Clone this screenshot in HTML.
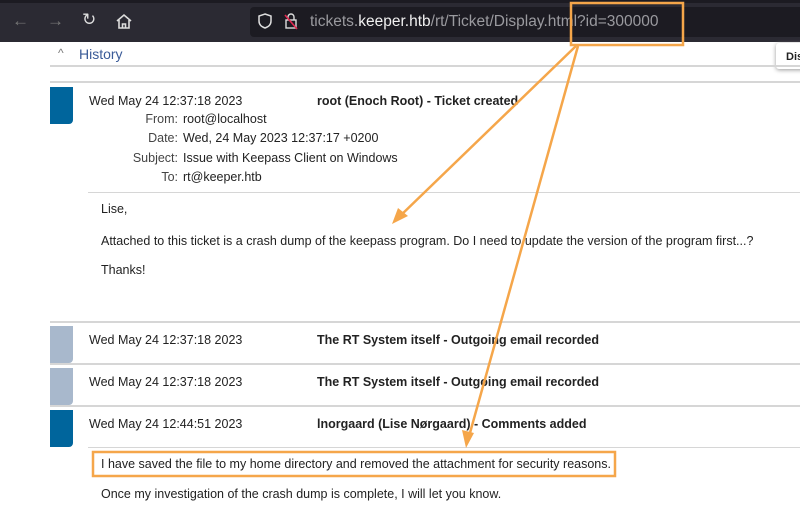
<!DOCTYPE html>
<html><head><meta charset="utf-8"><style>
body{margin:0;width:800px;height:531px;position:relative;overflow:hidden;background:#fff;font-family:"Liberation Sans",sans-serif;font-size:12.5px;color:#222}
.a{position:absolute;white-space:nowrap}
.b{font-weight:bold}
.lab{text-align:right;width:78px;color:#444}
.line{position:absolute;height:2px;background:#d6d6d6}
.mark{position:absolute;left:50px;width:23px;border-radius:0 0 4px 0}
</style></head><body>
<div class="a" style="left:0;top:0;width:800px;height:42px;background:#2b2a33"></div>
<div class="a" style="left:0;top:0;width:800px;height:3px;background:#1c1b22"></div>
<div class="a" style="left:250px;top:7px;width:560px;height:30px;background:#1c1b22;border-radius:4px"></div>
<div class="a" style="left:12px;top:11px;color:#777;font-size:17px">←</div>
<div class="a" style="left:47px;top:11px;color:#777;font-size:17px">→</div>
<div class="a" style="left:82px;top:10px;color:#ddd;font-size:17px">↻</div>
<svg class="a" style="left:115px;top:13px" width="18" height="18"><path d="M2 8 L9 2 L16 8 M4 7 V15 H14 V7 M7.5 15 V11 H10.5 V15" stroke="#ddd" stroke-width="1.6" fill="none"/></svg>
<svg class="a" style="left:257px;top:12px" width="16" height="18"><path d="M8 2 L14 4 V9 C14 13 11 15 8 16 C5 15 2 13 2 9 V4 Z" stroke="#ddd" stroke-width="1.5" fill="none"/></svg>
<svg class="a" style="left:284px;top:12px" width="14" height="18"><rect x="2" y="8" width="10" height="8" stroke="#ddd" fill="none" stroke-width="1.4"/><path d="M4 8 V5 A3 3 0 0 1 10 5 V8" stroke="#ddd" fill="none" stroke-width="1.4"/><path d="M1 3 L13 17" stroke="#e22850" stroke-width="1.6"/></svg>
<div class="a" style="left:310px;top:13px;font-size:15.5px;color:#9a9a9f">tickets.<span style="color:#f0f0f0">keeper.htb</span>/rt/Ticket/Display.html?id=300000</div>
<div class="a" style="left:776px;top:43px;width:40px;height:26px;background:#fff;box-shadow:0 1px 4px #999;border-radius:3px"></div>
<div class="a b" style="left:786px;top:51px;font-size:11px">Dis</div>
<div class="a" style="left:58px;top:46px;color:#777;font-size:12px">^</div>
<div class="a" style="left:79px;top:46px;color:#3a5b98;font-size:14px">History</div>
<div class="line" style="left:50px;top:65px;width:750px"></div>
<div class="line" style="left:50px;top:81px;width:750px"></div>
<div class="mark" style="top:87px;height:37px;background:#00659c"></div>
<div class="a" style="left:89px;top:94px">Wed May 24 12:37:18 2023</div>
<div class="a b" style="left:317px;top:94px">root (Enoch Root) - Ticket created</div>
<div class="a lab" style="left:100px;top:112px">From:</div><div class="a" style="left:183px;top:112px">root@localhost</div>
<div class="a lab" style="left:100px;top:131px">Date:</div><div class="a" style="left:183px;top:131px">Wed, 24 May 2023 12:37:17 +0200</div>
<div class="a lab" style="left:100px;top:151px">Subject:</div><div class="a" style="left:183px;top:151px">Issue with Keepass Client on Windows</div>
<div class="a lab" style="left:100px;top:170px">To:</div><div class="a" style="left:183px;top:170px">rt@keeper.htb</div>
<div class="line" style="left:88px;top:192px;width:712px;height:1px"></div>
<div class="a" style="left:101px;top:202px">Lise,</div>
<div class="a" style="left:101px;top:234px">Attached to this ticket is a crash dump of the keepass program. Do I need to update the version of the program first...?</div>
<div class="a" style="left:101px;top:263px">Thanks!</div>
<div class="line" style="left:50px;top:321px;width:750px"></div>
<div class="mark" style="top:326px;height:37px;background:#a8b8cc"></div>
<div class="a" style="left:89px;top:333px">Wed May 24 12:37:18 2023</div>
<div class="a b" style="left:317px;top:333px">The RT System itself - Outgoing email recorded</div>
<div class="line" style="left:50px;top:363px;width:750px"></div>
<div class="mark" style="top:368px;height:37px;background:#a8b8cc"></div>
<div class="a" style="left:89px;top:375px">Wed May 24 12:37:18 2023</div>
<div class="a b" style="left:317px;top:375px">The RT System itself - Outgoing email recorded</div>
<div class="line" style="left:50px;top:405px;width:750px"></div>
<div class="mark" style="top:410px;height:37px;background:#00659c"></div>
<div class="a" style="left:89px;top:417px">Wed May 24 12:44:51 2023</div>
<div class="a b" style="left:317px;top:417px">lnorgaard (Lise Nørgaard) - Comments added</div>
<div class="line" style="left:88px;top:447px;width:712px;height:1px"></div>
<div class="a" style="left:101px;top:457px">I have saved the file to my home directory and removed the attachment for security reasons.</div>
<div class="a" style="left:101px;top:487px">Once my investigation of the crash dump is complete, I will let you know.</div>
<svg class="a" style="left:0;top:0" width="800" height="531">
<rect x="571" y="3" width="112" height="42" fill="none" stroke="#f5a64a" stroke-width="2.5"/>
<rect x="93" y="452" width="522" height="24" fill="none" stroke="#f5a64a" stroke-width="2.5"/>
<path d="M576 46 L398 218" stroke="#f5a64a" stroke-width="2.5"/>
<path d="M392 224 L398 208 L408 216 Z" fill="#f5a64a"/>
<path d="M578 46 L468 440" stroke="#f5a64a" stroke-width="2.5"/>
<path d="M466 448 L462 430 L474 433 Z" fill="#f5a64a"/>
</svg>
</body></html>
